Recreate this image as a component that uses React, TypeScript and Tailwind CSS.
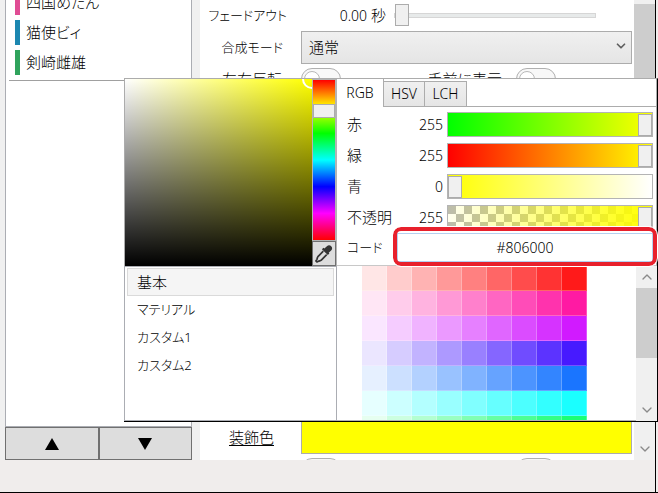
import { useState } from "react";
import { ChevronDown, ChevronUp } from "lucide-react";

const CHARACTERS = [
  { name: "四国めたん", bar: "bg-[#e04c94]" },
  { name: "猫使ビィ", bar: "bg-[#1c87b0]" },
  { name: "剣崎雌雄", bar: "bg-[#2fa35c]" },
];

const PALETTES = [
  { name: "基本", size: "text-[15px]" },
  { name: "マテリアル", size: "text-[13px]" },
  { name: "カスタム1", size: "text-[13px]" },
  { name: "カスタム2", size: "text-[13px]" },
];

const HUES = [0, 324, 288, 252, 216, 180, 144];
const LIGHTNESS = [95, 90, 85, 80, 75, 70, 65, 60, 55];

const CHANNELS = [
  {
    id: "red",
    label: "赤",
    value: 255,
    track: "bg-[linear-gradient(to_right,#00ff00,#ffff00)]",
  },
  {
    id: "green",
    label: "緑",
    value: 255,
    track: "bg-[linear-gradient(to_right,#ff0000,#ffff00)]",
  },
  {
    id: "blue",
    label: "青",
    value: 0,
    track: "bg-[linear-gradient(to_right,#ffff00,#ffffff)]",
  },
  {
    id: "alpha",
    label: "不透明",
    value: 255,
    track:
      "bg-[linear-gradient(to_right,#ffff0010,#ffff00),repeating-conic-gradient(#ffffff_0_25%,#b8b8b8_0_50%)] bg-[size:100%_100%,16px_16px]",
  },
];

function EyedropperIcon() {
  return (
    <svg viewBox="0 0 20 20" className="size-5" fill="none">
      <path
        d="M12.6 2.6a2.9 2.9 0 0 1 4.6-.4 2.9 2.9 0 0 1-.3 4.5l-2.2 2 .7.8-1.6 1.6L7.9 5.300l1.600-1.600.9.9Z"
        fill="#333333"
      />
      <path
        d="M9.300 7.200 3.900 12.700c-.8.9-.5 1.900-1.100 2.900L1.900 17l1 1 1.500-.8c1-.6 2-.2 2.900-1.100l5.400-5.500"
        stroke="#333333"
        strokeWidth="1.700"
        strokeLinejoin="round"
      />
    </svg>
  );
}

function Toggle({ label }: { label: string }) {
  return (
    <input
      type="checkbox"
      role="switch"
      aria-label={label}
      className="relative h-[22px] w-10 shrink-0 appearance-none rounded-full border border-[#b0b0b0] bg-[#f8f8f8] before:absolute before:left-[2px] before:top-[2px] before:size-4 before:rounded-full before:border before:border-[#b8b8b8] before:bg-white"
    />
  );
}

function ChannelRow({ id, label, initial, track }: { id: string; label: string; initial: number; track: string }) {
  const [value, setValue] = useState(initial);

  return (
    <div className="flex h-[31px] items-center">
      <label htmlFor={id} className="w-[60px] shrink-0 text-[15px]">
        {label}
      </label>
      <span className="w-9 shrink-0 text-right text-sm">{value}</span>
      <input
        id={id}
        type="range"
        min={0}
        max={255}
        value={value}
        onChange={(e) => setValue(Number(e.target.value))}
        className={`ml-1 h-[25px] min-w-0 flex-1 appearance-none border border-[#b4b4b4] ${track} [&::-webkit-slider-thumb]:h-[22px] [&::-webkit-slider-thumb]:w-[14px] [&::-webkit-slider-thumb]:appearance-none [&::-webkit-slider-thumb]:border [&::-webkit-slider-thumb]:border-[#acacac] [&::-webkit-slider-thumb]:bg-[#f0f0f0]`}
      />
    </div>
  );
}

function ColorPopup() {
  const [palette, setPalette] = useState(0);
  const [code, setCode] = useState("#806000");

  return (
    <div className="absolute left-[124px] right-0 top-[78px] flex flex-col border-b border-r border-t border-b-black border-r-black border-t-[#acacac] bg-white">
      {/* Picker + channels */}
      <div className="flex h-[187px]">
        <div className="relative w-[188px] shrink-0 overflow-hidden border-l border-[#acacac] bg-[linear-gradient(to_top,#000,transparent),linear-gradient(to_right,#fff,#ff0)]">
          <div className="absolute -right-2.5 -top-2.5 size-5 rounded-full border-2 border-white" />
        </div>

        <div className="flex w-[25px] shrink-0 flex-col border-r border-[#b4b4b4]">
          <input
            type="range"
            aria-label="色相"
            min={0}
            max={360}
            defaultValue={60}
            className="m-0 min-h-0 w-full flex-1 appearance-none border border-[#b4b4b4] bg-[linear-gradient(to_bottom,#f00,#ff0,#0f0,#0ff,#00f,#f0f,#f00)] [writing-mode:vertical-lr] [&::-webkit-slider-thumb]:h-[14px] [&::-webkit-slider-thumb]:w-[22px] [&::-webkit-slider-thumb]:appearance-none [&::-webkit-slider-thumb]:border [&::-webkit-slider-thumb]:border-[#acacac] [&::-webkit-slider-thumb]:bg-[#f0f0f0]"
          />
          <button
            aria-label="スポイト"
            className="flex h-[25px] shrink-0 items-center justify-center border border-[#707070] bg-[#dddddd]"
          >
            <EyedropperIcon />
          </button>
        </div>

        <div className="flex min-w-0 flex-1 flex-col border-b border-r border-b-[#c8c8c8] border-r-[#acacac]">
          <div role="tablist" className="flex h-7 shrink-0 items-end text-sm">
            <button role="tab" aria-selected="true" className="h-full w-[47px] border-r border-[#acacac] bg-white">
              RGB
            </button>
            <button
              role="tab"
              aria-selected="false"
              className="h-[26px] w-[41px] border-b border-r border-t border-[#acacac] bg-linear-to-b from-[#f0f0f0] to-[#e5e5e5]"
            >
              HSV
            </button>
            <button
              role="tab"
              aria-selected="false"
              className="h-[26px] w-[42px] border-b border-r border-t border-[#acacac] bg-linear-to-b from-[#f0f0f0] to-[#e5e5e5]"
            >
              LCH
            </button>
            <div className="h-full flex-1 border-b border-[#acacac]" />
          </div>

          <div className="flex flex-col pl-[10px] pr-[3px] pt-[2px]">
            {CHANNELS.map((c) => (
              <ChannelRow key={c.id} id={c.id} label={c.label} initial={c.value} track={c.track} />
            ))}
            <div className="flex h-[29px] items-center">
              <label htmlFor="code" className="w-[50px] shrink-0 text-[13px]">
                コード
              </label>
              <div className="relative h-full min-w-0 flex-1">
                <input
                  id="code"
                  value={code}
                  onChange={(e) => setCode(e.target.value)}
                  className="relative z-10 h-full w-full border border-[#b5d0f0] bg-white text-center text-sm outline-none"
                />
                {/* Highlight ring around the code box */}
                <div className="pointer-events-none absolute -inset-x-1 -bottom-1 -top-1.5 z-20 rounded-lg border-4 border-[#e8202c] outline-1 outline-white" />
              </div>
            </div>
          </div>
        </div>
      </div>

      {/* Palette list + swatches */}
      <div className="flex h-[155px]">
        <ul role="listbox" aria-label="パレット" className="w-[213px] shrink-0 border border-[#abadb3] px-[2px] py-px">
          {PALETTES.map((p, i) => (
            <li
              key={p.name}
              role="option"
              aria-selected={i === palette}
              onClick={() => setPalette(i)}
              className={`flex h-7 items-center border px-[9px] ${p.size} ${
                i === palette ? "border-[#dadada] bg-[#f5f5f5]" : "border-transparent"
              }`}
            >
              {p.name}
            </li>
          ))}
        </ul>

        <div className="min-w-0 flex-1 overflow-hidden border-b border-[#b4b4b4] pl-[25px]">
          <div className="grid w-[225px] grid-cols-9">
            {HUES.map((h) =>
              LIGHTNESS.map((l) => (
                <div
                  key={`${h}-${l}`}
                  className="h-[25px] border-b border-r border-white/25"
                  style={{ backgroundColor: `hsl(${h} 100% ${l}%)` }}
                />
              ))
            )}
          </div>
        </div>

        <div className="flex w-[21px] shrink-0 flex-col items-center bg-[#f0f0f0] text-[#8a8a8a]">
          <ChevronUp className="my-[3px] size-4" />
          <div className="h-[70px] w-full bg-[#cdcdcd]" />
          <ChevronDown className="mb-[3px] mt-auto size-4" />
        </div>
      </div>
    </div>
  );
}

export default function App() {
  return (
    <div className="relative flex h-screen flex-col overflow-hidden border-b border-black bg-[#f0edec] pr-[2px] font-['Noto_Sans','Noto_Sans_CJK_JP',sans-serif] font-light text-black [font-feature-settings:'palt']">
      <div className="flex min-h-0 flex-1 border-r border-black bg-[#f0f0f0]">
        {/* Character list */}
        <aside className="ml-[5px] flex w-[187px] shrink-0 flex-col">
          <div className="min-h-0 flex-1 overflow-hidden border-x border-b border-[#abadb3] bg-white px-[3px]">
            <ul className="-mt-[13px] border-b border-[#a0a0a0] pb-[3px] text-[15px]">
              {CHARACTERS.map((c) => (
                <li key={c.name} className="flex h-[30px] items-center gap-[6px] pl-[6px]">
                  <span className={`h-[25px] w-[5px] ${c.bar}`} />
                  {c.name}
                </li>
              ))}
            </ul>
          </div>
          <div className="flex h-[33px] shrink-0">
            <button aria-label="上へ" className="flex flex-1 items-center justify-center border border-[#707070] bg-[#dddddd]">
              <svg viewBox="0 0 14 12" className="h-3 w-3.5">
                <path d="M7 0 14 12H0Z" />
              </svg>
            </button>
            <button aria-label="下へ" className="flex flex-1 items-center justify-center border border-[#707070] bg-[#dddddd]">
              <svg viewBox="0 0 14 12" className="h-3 w-3.5">
                <path d="M0 0H14L7 12Z" />
              </svg>
            </button>
          </div>
        </aside>

        {/* Item properties */}
        <main className="ml-2 flex min-w-0 flex-1 flex-col overflow-hidden bg-white pr-[2px] text-[15px]">
          <div className="flex h-[31px] shrink-0 items-center">
            <label htmlFor="fadeout" className="w-[101px] shrink-0 whitespace-nowrap pr-[14px] text-right text-[13px]">
              フェードアウト
            </label>
            <span className="w-[85px] shrink-0 text-right">
              <span className="text-sm">0.00</span> 秒
            </span>
            <input
              id="fadeout"
              type="range"
              min={0}
              max={10}
              defaultValue={0}
              className="ml-2 mr-9 h-[22px] min-w-0 flex-1 appearance-none bg-transparent [&::-webkit-slider-runnable-track]:h-[5px] [&::-webkit-slider-runnable-track]:border [&::-webkit-slider-runnable-track]:border-[#d6d6d6] [&::-webkit-slider-runnable-track]:bg-[#e7eaea] [&::-webkit-slider-thumb]:-mt-[10px] [&::-webkit-slider-thumb]:h-[22px] [&::-webkit-slider-thumb]:w-[14px] [&::-webkit-slider-thumb]:appearance-none [&::-webkit-slider-thumb]:border [&::-webkit-slider-thumb]:border-[#acacac] [&::-webkit-slider-thumb]:bg-[#f0f0f0]"
            />
          </div>

          <div className="flex h-[33px] shrink-0 items-center">
            <label htmlFor="blend" className="w-[101px] shrink-0 whitespace-nowrap pr-[18px] text-right text-[13px]">
              合成モード
            </label>
            <div className="relative h-full min-w-0 flex-1">
              <select
                id="blend"
                className="h-full w-full appearance-none border border-[#acacac] bg-linear-to-b from-[#f0f0f0] to-[#e5e5e5] px-[7px]"
              >
                <option>通常</option>
              </select>
              <ChevronDown
                strokeWidth={3}
                className="pointer-events-none absolute right-1 top-2 size-3.5 text-[#606060]"
              />
            </div>
          </div>

          <div className="flex shrink-0 items-center pt-1">
            <span className="w-[101px] shrink-0 pr-[19px] text-right">左右反転</span>
            <Toggle label="左右反転" />
            <span className="w-[175px] shrink-0 pr-[14px] text-right">手前に表示</span>
            <Toggle label="手前に表示" />
          </div>

          <div className="mt-auto flex h-[33px] shrink-0 items-center">
            <a href="#color" className="w-[101px] shrink-0 pr-[27px] text-right underline underline-offset-2">
              装飾色
            </a>
            <button aria-label="装飾色" className="h-full min-w-0 flex-1 border border-[#acacac] bg-[#ffff00]" />
          </div>
          <div className="flex h-[6px] shrink-0 items-start pl-[101px] pt-1">
            <Toggle label="縁取り" />
            <div className="w-[175px] shrink-0" />
            <Toggle label="影" />
          </div>
        </main>

        {/* Scrollbar */}
        <div className="flex w-[21px] shrink-0 flex-col items-center pt-1 text-[#8a8a8a]">
          <div className="h-[240px] w-full bg-[#cdcdcd]" />
          <ChevronDown className="mb-[3px] mt-auto size-4" />
        </div>
      </div>

      <footer className="h-8 shrink-0 border-r border-black" />

      <ColorPopup />
    </div>
  );
}
